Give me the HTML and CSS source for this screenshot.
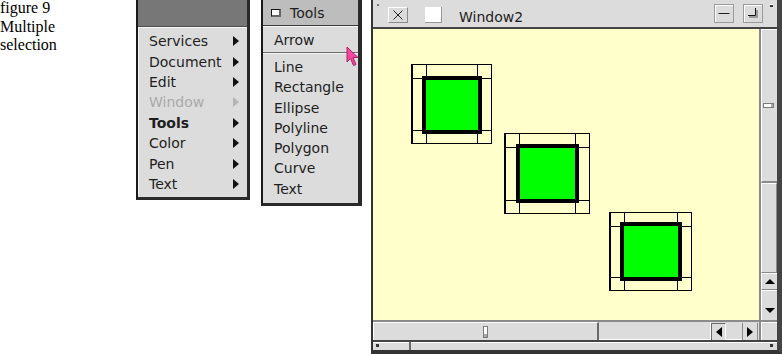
FILE: index.html
```html
<!DOCTYPE html>
<html>
<head>
<meta charset="utf-8">
<link rel="stylesheet" href="styles.css">
</head>
<body>
<div class="page">
  <div class="caption">figure 9<br>Multiple<br>selection</div>

  <div class="menu menu-main">
    <div class="menu-title"></div>
    <ul class="items">
      <li><span>Services</span><i class="tri"></i></li>
      <li><span>Document</span><i class="tri"></i></li>
      <li><span>Edit</span><i class="tri"></i></li>
      <li class="disabled"><span>Window</span><i class="tri"></i></li>
      <li class="bold"><span>Tools</span><i class="tri"></i></li>
      <li><span>Color</span><i class="tri"></i></li>
      <li><span>Pen</span><i class="tri"></i></li>
      <li><span>Text</span><i class="tri"></i></li>
    </ul>
  </div>

  <div class="menu menu-tools">
    <div class="tools-title"><span class="tbox"></span><span>Tools</span></div>
    <div class="tools-first">Arrow</div>
    <div class="sep"></div>
    <ul class="tools-items">
      <li>Line</li>
      <li>Rectangle</li>
      <li>Ellipse</li>
      <li>Polyline</li>
      <li>Polygon</li>
      <li>Curve</li>
      <li>Text</li>
    </ul>
  </div>

  <div class="window">
    <div class="titlebar">
      <span class="tdot"></span>
      <span class="btn close-btn"><svg width="18" height="14" viewBox="0 0 18 14"><path d="M4.5 2.5 L13.5 11.5 M13.5 2.5 L4.5 11.5" stroke="#222" stroke-width="1" fill="none"/></svg></span>
      <span class="wsq"></span>
      <span class="wtitle">Window2</span>
      <span class="spacer"></span>
      <span class="btn min-btn"><svg width="18" height="17" viewBox="0 0 18 17"><path d="M3.5 8.5 H14.5" stroke="#222" stroke-width="1"/></svg></span>
      <span class="btn zoom-btn"><svg width="18" height="17" viewBox="0 0 18 17"><rect x="5" y="11" width="8" height="2" fill="#9a9a9a"/><rect x="12" y="5" width="2" height="8" fill="#9a9a9a"/><path d="M4 10.5 H11.5 V3" stroke="#111" stroke-width="1" fill="none"/></svg></span>
      <span class="tmark"></span>
    </div>
    <div class="wbody">
      <div class="canvas">
        <div class="sel" style="left:38px;top:35px;width:81px;height:80px"><div class="shape" style="left:9px;top:11px;width:60px;height:58px"></div></div>
        <div class="sel" style="left:131px;top:104px;width:86px;height:81px"><div class="shape" style="left:10px;top:10px;width:63px;height:59px"></div></div>
        <div class="sel" style="left:236px;top:183px;width:83px;height:79px"><div class="shape" style="left:9px;top:9px;width:62px;height:59px"></div></div>
      </div>
      <div class="vscroll">
        <div class="vthumb"><span class="vknob"></span></div>
        <div class="vtrack"></div>
        <div class="vbtn up"><i class="tri-up"></i></div>
        <div class="vbtn down"><i class="tri-down"></i></div>
      </div>
      <div class="hscroll">
        <div class="hthumb"><span class="hknob"></span></div>
        <div class="htrack"></div>
        <div class="hbtn left"><i class="tri-left"></i></div>
        <div class="hgap"></div>
        <div class="hbtn right"><i class="tri-right"></i></div>
      </div>
      <div class="corner"></div>
    </div>
    <div class="statusbar">
      <div class="sb-left"><span class="sb-dot"></span></div>
      <div class="sb-div"></div>
      <div class="sb-rest"><span class="sb-dot2"></span></div>
    </div>
  </div>

  <svg class="cursor" width="14" height="21" viewBox="0 0 14 21"><path d="M1 1 L1 16 L4.5 12.5 L7.5 19.5 L10 18.5 L7 11.5 L12 11.5 Z" fill="#f2479c" stroke="#b0206a" stroke-width="1"/></svg>
</div>
</body>
</html>
```

FILE: styles.css
```css
* { box-sizing: border-box; }
body {
  margin: 0;
  background: #fff;
  font-family: "DejaVu Sans", sans-serif;
  width: 782px;
  height: 354px;
  overflow: hidden;
}
.page {
  position: relative;
  display: flex;
  align-items: flex-start;
  height: 354px;
}
.caption {
  flex: none;
  width: 136px;
  margin-top: -1px;
  font: 16px/18.5px "Liberation Serif", serif;
  color: #000;
}

/* menus */
.menu {
  flex: none;
  background: #dcdcdc;
  border-left: 2px solid #1a1a1a;
  border-right: 3px solid #2a2a2a;
  border-bottom: 3px solid #2a2a2a;
}
.menu-main { width: 114px; height: 200px; }
.menu-title {
  height: 27px;
  background: #777;
  border-bottom: 1px solid #4e4e4e;
}
.items {
  list-style: none;
  margin: 0;
  padding: 3px 0 0;
  border-top: 1px solid #f6f6f6;
  border-left: 1px solid #f6f6f6;
}
.items li {
  display: flex;
  justify-content: space-between;
  align-items: center;
  height: 20.4px;
  padding: 0 8px 0 10px;
  font-size: 14px;
  color: #1e1e1e;
}
.tri {
  width: 0;
  height: 0;
  border-left: 6px solid #111;
  border-top: 5px solid transparent;
  border-bottom: 5px solid transparent;
}
.items li.disabled { color: #a9a9a9; }
.items li.disabled .tri { border-left-color: #b4b4b4; }
.items li.bold { font-weight: bold; }

.menu-tools {
  margin-left: 11px;
  width: 101px;
  height: 206px;
  border-right-width: 4px;
}
.tools-title {
  display: flex;
  align-items: center;
  height: 26px;
  background: #bdbdbd;
  border-bottom: 1px solid #3a3a3a;
  font-size: 14px;
  color: #1e1e1e;
  padding-left: 8px;
  gap: 9px;
}
.tbox {
  width: 10px;
  height: 8px;
  background: #fff;
  border: 1px solid #111;
  border-right: 2px solid #666;
  border-bottom: 2px solid #666;
}
.tools-first {
  height: 26px;
  line-height: 26px;
  padding-left: 11px;
  font-size: 14px;
  color: #1e1e1e;
  border-top: 1px solid #f6f6f6;
}
.sep {
  height: 2px;
  border-top: 1px solid #6a6a6a;
  border-bottom: 1px solid #f6f6f6;
}
.tools-items {
  list-style: none;
  margin: 0;
  padding: 3px 0 0 11px;
}
.tools-items li {
  height: 20.3px;
  line-height: 20.3px;
  font-size: 14px;
  color: #1e1e1e;
}

/* window */
.window {
  flex: none;
  margin-left: 9px;
  width: 411px;
  height: 354px;
  display: flex;
  flex-direction: column;
  background: #dcdcdc;
  border-left: 2px solid #333;
  border-right: 5px solid #444;
  border-bottom: 4px solid #333;
}
.titlebar {
  flex: none;
  height: 29px;
  display: flex;
  align-items: flex-start;
  border-bottom: 2px solid #444;
  background: #dcdcdc;
}
.tdot {
  width: 2px; height: 2px;
  margin: 4px 0 0 4px;
  background: #777;
}
.btn {
  display: flex;
  align-items: center;
  justify-content: center;
  background: #dcdcdc;
  border: 1px solid;
  border-color: #fff #8a8a8a #8a8a8a #fff;
}
.close-btn { width: 20px; height: 16px; margin: 7px 0 0 9px; }
.wsq {
  width: 17px; height: 16px;
  margin: 7px 0 0 17px;
  background: #fff;
  border-right: 1px solid #999;
  border-bottom: 1px solid #999;
}
.wtitle {
  margin: 9px 0 0 17px;
  font-size: 14px;
  line-height: 16px;
  color: #1e1e1e;
}
.spacer { flex: 1; }
.min-btn, .zoom-btn {
  width: 20px; height: 19px;
  margin-top: 4px;
  border-color: #9a9a9a;
  box-shadow: inset 1px 1px #fff;
}
.zoom-btn { margin-left: 9px; }
.tmark {
  width: 3px; height: 3px;
  margin: 4px 4px 0 7px;
  background: #333;
  border-top: 1px solid #fff;
}

.wbody {
  flex: none;
  display: grid;
  grid-template-columns: 386px 16px;
  grid-template-rows: 291px 18px;
  gap: 2px;
  background: #8a8a8a;
}
.canvas {
  position: relative;
  background: #ffffcc;
  overflow: hidden;
}
.sel {
  position: absolute;
  border: 1px solid #000;
  border-left-width: 2px;
  background:
    linear-gradient(#000, #000) 13px 0 / 1px 100% no-repeat,
    linear-gradient(#000, #000) right 13px top 0 / 1px 100% no-repeat,
    linear-gradient(#000, #000) 0 13px / 100% 1px no-repeat,
    linear-gradient(#000, #000) left 0 bottom 12px / 100% 1px no-repeat;
}
.shape {
  position: absolute;
  background: #00ff00;
  border: 4px solid #000;
}

.vscroll {
  display: flex;
  flex-direction: column;
  background: #dcdcdc;
}
.vthumb {
  height: 154px;
  display: flex;
  align-items: center;
  justify-content: center;
  padding-right: 3px;
  border-left: 1px solid #fff;
  border-top: 1px solid #fff;
  border-bottom: 2px solid #8a8a8a;
}
.vknob {
  width: 11px; height: 5px;
  border: 1px solid #7a7a7a;
  background: linear-gradient(to right, #fff 75%, #aaa 75%);
}
.vtrack {
  height: 90px;
  border-left: 1px solid #fff;
  border-top: 1px solid #fff;
  border-right: 1px solid #8a8a8a;
  border-bottom: 1px solid #8a8a8a;
}
.vbtn {
  display: flex;
  justify-content: center;
  border-left: 1px solid #fff;
}
.vbtn.up { height: 17px; align-items: center; border-bottom: 1px solid #8a8a8a; border-top: 1px solid #fff; }
.vbtn.down { height: 30px; align-items: flex-end; padding-bottom: 7px; border-top: 1px solid #fff; }
.tri-up {
  width: 0; height: 0;
  border-bottom: 5px solid #000;
  border-left: 5px solid transparent;
  border-right: 5px solid transparent;
}
.tri-down {
  width: 0; height: 0;
  border-top: 5px solid #000;
  border-left: 5px solid transparent;
  border-right: 5px solid transparent;
}

.hscroll {
  display: flex;
  background: #dcdcdc;
}
.hthumb {
  width: 226px;
  display: flex;
  align-items: center;
  justify-content: center;
  border-right: 2px solid #6a6a6a;
  border-top: 1px solid #fff;
  border-left: 1px solid #fff;
}
.hknob {
  width: 5px; height: 12px;
  border: 1px solid #7a7a7a;
  background: linear-gradient(to bottom, #fff 70%, #aaa 70%);
}
.htrack {
  width: 112px;
  border-bottom: 1px solid #fff;
  border-right: 1px solid #fff;
}
.hbtn {
  display: flex;
  align-items: center;
  justify-content: center;
  height: 17px;
  margin-top: 1px;
}
.hbtn.left { width: 15px; border-left: 1px solid #6a6a6a; border-top: 1px solid #6a6a6a; border-right: 1px solid #fff; }
.hgap { width: 16px; border-bottom: 1px solid #fff; }
.hbtn.right { width: 16px; border-left: 1px solid #8a8a8a; border-right: 1px solid #8a8a8a; }
.tri-left {
  width: 0; height: 0;
  border-right: 6px solid #000;
  border-top: 5px solid transparent;
  border-bottom: 5px solid transparent;
}
.tri-right {
  width: 0; height: 0;
  border-left: 6px solid #000;
  border-top: 5px solid transparent;
  border-bottom: 5px solid transparent;
}
.corner {
  background: #dcdcdc;
  border-left: 1px solid #fff;
  border-top: 1px solid #fff;
}

.statusbar {
  flex: none;
  height: 10px;
  display: flex;
  border-top: 2px solid #444;
}
.sb-left {
  width: 36px;
  border-top: 1px solid #fff;
  padding: 1px 0 0 3px;
}
.sb-dot, .sb-dot2 {
  display: block;
  width: 3px; height: 3px;
  background: #333;
}
.sb-div { width: 2px; background: #6a6a6a; }
.sb-rest {
  flex: 1;
  display: flex;
  justify-content: flex-end;
  padding: 1px 4px 0 0;
  border-top: 1px solid #fff;
}

.cursor {
  position: absolute;
  left: 346px;
  top: 46px;
}
```
